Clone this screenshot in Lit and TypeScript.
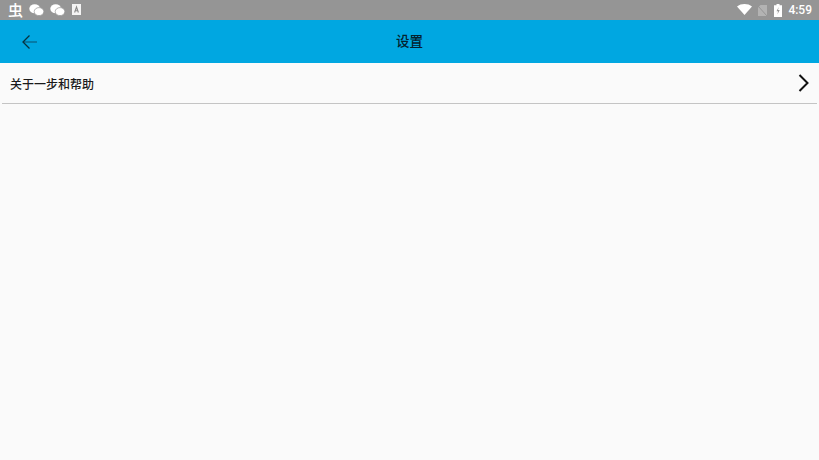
import { LitElement, html, css } from "lit";
import { customElement } from "lit/decorators.js";

@customElement("app-root")
export class AppRoot extends LitElement {
  static styles = css`
    :host { display: block; width: 819px; height: 460px; background: #fafafa; overflow: hidden; font-family: "Roboto", "Noto Sans CJK SC", sans-serif; }
    .status { height: 20px; background: #959595; display: flex; align-items: center; justify-content: space-between; padding: 0 7px 0 8px; }
    .group { display: flex; align-items: center; }
    .chong { color: #fff; font: 500 15px/20px "Noto Sans CJK SC", sans-serif; width: 15px; margin-right: 6px; }
    .wc { margin-right: 6px; }
    .letter { margin-left: 1px; margin-top: -1px; }
    .wifi { margin-right: 6px; margin-top: -1px; }
    .sim { margin-right: 7px; }
    .time { color: #fff; font-size: 12px; font-weight: 500; margin-left: 6px; line-height: 20px; }
    .sb { display: block; }
    .bar { height: 43px; background: #00a7e1; display: grid; grid-template-columns: 1fr auto 1fr; align-items: center; padding: 0 22px; }
    .title { font-size: 13.5px; font-weight: 500; line-height: 16px; color: #04222e; margin-top: -1px; }
    .row { height: 40px; margin: 0 2px; padding: 0 7px 0 8px; border-bottom: 1px solid #c4c4c4; display: flex; align-items: center; justify-content: space-between; }
    .label { font-size: 12px; font-weight: 500; color: #1a1a1a; }
  `;
  render() {
    return html`
      <div class="status">
        <div class="group">
          <span class="chong">虫</span>
          <svg class="sb wc" width="15" height="12" viewBox="0 0 15 12"><ellipse cx="5.7" cy="4.7" rx="5.4" ry="4.5" fill="#fff"/><ellipse cx="10" cy="7.6" rx="4.8" ry="4" fill="#fff" stroke="#959595" stroke-width=".7"/></svg>
          <svg class="sb wc" width="15" height="12" viewBox="0 0 15 12"><ellipse cx="5.7" cy="4.7" rx="5.4" ry="4.5" fill="#fff"/><ellipse cx="10" cy="7.6" rx="4.8" ry="4" fill="#fff" stroke="#959595" stroke-width=".7"/></svg>
          <svg class="sb letter" width="9" height="11" viewBox="0 0 9 11"><rect width="9" height="11" fill="#f4f4f4"/><path d="M2.6 8.5 4.5 3l1.9 5.5M3.3 6.8h2.4" fill="none" stroke="#8a8a8a" stroke-width="1.1"/></svg>
        </div>
        <div class="group">
          <svg class="sb wifi" width="15" height="11" viewBox="0 0 15 11"><path d="M0 2.5C4-.8 11-.8 15 2.5L7.5 11z" fill="#fff"/></svg>
          <svg class="sb sim" width="9" height="11" viewBox="0 0 9 11"><path d="M0 2.5 2.5 0H9v11H0z" fill="#b3b3b3"/><path d="M0 1 9 11" stroke="#959595"/></svg>
          <svg class="sb" width="8" height="13" viewBox="0 0 8 13"><path d="M2.5 0h3v1.3H8V13H0V1.3h2.5z" fill="#fff"/><path d="M4.7 3 2.5 7.2h1.6L3.4 10.4 5.7 6H4z" fill="#959595"/></svg>
          <span class="time">4:59</span>
        </div>
      </div>
      <div class="bar">
        <svg class="sb" width="15" height="16" viewBox="0 0 15 16"><path d="M15 8H1" fill="none" stroke="#0a5f80" stroke-width="1.2"/><path d="M7.5 1.5 1 8l6.5 6.5" fill="none" stroke="#06323f" stroke-width="1.3"/></svg>
        <span class="title">设置</span>
        <span></span>
      </div>
      <div class="row">
        <span class="label">关于一步和帮助</span>
        <svg class="sb" width="12" height="18" viewBox="0 0 12 18"><path d="M1.5 1 9.5 9 1.5 17" fill="none" stroke="#111" stroke-width="2"/></svg>
      </div>
    `;
  }
}
